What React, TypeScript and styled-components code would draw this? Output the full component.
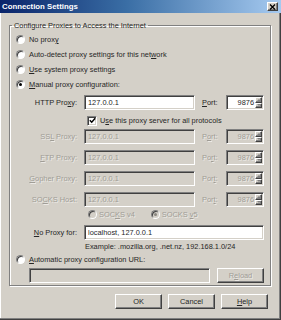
import React from "react";
import styled, { createGlobalStyle, css } from "styled-components";

const GlobalStyle = createGlobalStyle`
  html, body {
    margin: 0;
    padding: 0;
    background: #d4d0c8;
  }
  body {
    font-family: "Liberation Sans", Arial, sans-serif;
    font-size: 7.4px;
    color: #262626;
  }
  u { text-underline-offset: 1px; }
`;

const sunken = css`
  border: 1px solid;
  border-color: #808080 #fff #fff #808080;
  box-shadow: inset 1px 1px #404040, inset -1px -1px #d4d0c8;
`;

const raised = css`
  border: 1px solid;
  border-color: #fff #404040 #404040 #fff;
  box-shadow: inset -1px -1px #808080;
`;

const dimText = css`
  color: #a09d96;
  text-shadow: 1px 1px rgba(255, 255, 255, 0.55);
`;

interface ProxyRowProps {
  label: React.ReactNode;
  portLabel: React.ReactNode;
  host: string;
  port: string;
  disabled?: boolean;
}

function ProxyRow({ label, portLabel, host, port, disabled }: ProxyRowProps) {
  return (
    <Row>
      <FieldLabel $disabled={disabled}>{label}</FieldLabel>
      <TextBox $disabled={disabled} $width={111}>
        {host}
      </TextBox>
      <PortLabel $disabled={disabled}>{portLabel}</PortLabel>
      <PortBox $disabled={disabled}>
        <PortValue>{port}</PortValue>
        <Spinner>
          <SpinHalf>
            <Arrow />
          </SpinHalf>
          <SpinHalf>
            <Arrow $down />
          </SpinHalf>
        </Spinner>
      </PortBox>
    </Row>
  );
}

function App() {
  return (
    <>
      <GlobalStyle />
      <Window>
        <TitleBar>
          <Title>Connection Settings</Title>
          <CloseButton>
            <svg width="7" height="6" viewBox="0 0 7 6">
              <path d="M1 0.5 L6 5.5 M6 0.5 L1 5.5" stroke="#000" strokeWidth="1.3" />
            </svg>
          </CloseButton>
        </TitleBar>

        <Body>
          <Group>
            <Legend>Configure Proxies to Access the Internet</Legend>
            <GroupBody>
              <RadioRow>
                <Radio />
                <span>
                  No prox<u>y</u>
                </span>
              </RadioRow>
              <RadioRow>
                <Radio />
                <span>
                  Auto-detect proxy settings for this net<u>w</u>ork
                </span>
              </RadioRow>
              <RadioRow>
                <Radio />
                <span>
                  <u>U</u>se system proxy settings
                </span>
              </RadioRow>
              <RadioRow>
                <Radio $checked />
                <span>
                  <u>M</u>anual proxy configuration:
                </span>
              </RadioRow>

              <HttpBlock>
                <ProxyRow
                  label={<>HTTP Pro<u>x</u>y:</>}
                  portLabel={<><u>P</u>ort:</>}
                  host="127.0.0.1"
                  port="9876"
                />
              </HttpBlock>

              <CheckRow>
                <CheckBox>
                  <svg width="7" height="7" viewBox="0 0 7 7">
                    <path d="M0.8 3.3 L2.7 5.2 L6.2 1.2" stroke="#000" strokeWidth="1.5" fill="none" />
                  </svg>
                </CheckBox>
                <span>
                  U<u>s</u>e this proxy server for all protocols
                </span>
              </CheckRow>

              <ProxyList>
                <ProxyRow
                  disabled
                  label={<>SS<u>L</u> Proxy:</>}
                  portLabel={<>P<u>o</u>rt:</>}
                  host="127.0.0.1"
                  port="9876"
                />
                <ProxyRow
                  disabled
                  label={<><u>F</u>TP Proxy:</>}
                  portLabel={<>Po<u>r</u>t:</>}
                  host="127.0.0.1"
                  port="9876"
                />
                <ProxyRow
                  disabled
                  label={<><u>G</u>opher Proxy:</>}
                  portLabel={<>Por<u>t</u>:</>}
                  host="127.0.0.1"
                  port="9876"
                />
                <ProxyRow
                  disabled
                  label={<>SO<u>C</u>KS Host:</>}
                  portLabel={<>Por<u>t</u>:</>}
                  host="127.0.0.1"
                  port="9876"
                />
              </ProxyList>

              <SocksRow>
                <Radio $disabled />
                <SocksLabel>
                  SOC<u>K</u>S v4
                </SocksLabel>
                <Radio $disabled $checked />
                <SocksLabel>
                  SOCKS <u>v</u>5
                </SocksLabel>
              </SocksRow>

              <NoProxyRow>
                <FieldLabel>
                  <u>N</u>o Proxy for:
                </FieldLabel>
                <TextBox $width={180}>localhost, 127.0.0.1</TextBox>
              </NoProxyRow>

              <Example>Example: .mozilla.org, .net.nz, 192.168.1.0/24</Example>

              <AutoRow>
                <Radio />
                <span>
                  <u>A</u>utomatic proxy configuration URL:
                </span>
              </AutoRow>

              <UrlRow>
                <TextBox $disabled $width={181} />
                <Button $disabled>
                  R<u>e</u>load
                </Button>
              </UrlRow>
            </GroupBody>
          </Group>

          <ButtonBar>
            <Button>OK</Button>
            <Button>Cancel</Button>
            <Button>
              <u>H</u>elp
            </Button>
          </ButtonBar>
        </Body>
      </Window>
    </>
  );
}

export default App;

const Window = styled.div`
  width: 281px;
  height: 320px;
  box-sizing: border-box;
  background: #d4d0c8;
  box-shadow: inset -1px -1px #404040, inset -2px -2px #808080, inset 1px 0 #fff;
`;

const TitleBar = styled.div`
  height: 13px;
  display: flex;
  align-items: center;
  justify-content: space-between;
  padding: 0 3px 0 2px;
  background: linear-gradient(to right, #0a246a, #3a6ea5 45%, #a6caf0);
`;

const Title = styled.span`
  color: #fff;
  font-weight: bold;
  font-size: 7.8px;
`;

const CloseButton = styled.div`
  ${raised};
  box-sizing: border-box;
  width: 11px;
  height: 9px;
  background: #d4d0c8;
  display: flex;
  align-items: center;
  justify-content: center;
`;

const Body = styled.div`
  padding: 8px 10px 0 9px;
`;

const Group = styled.fieldset`
  margin: 0;
  padding: 0 2px 2px 2px;
  border: 1px solid #808080;
  box-shadow: inset 1px 1px #fff, 1px 1px #fff;
`;

const Legend = styled.legend`
  padding: 0 2px;
  line-height: 9px;
`;

const GroupBody = styled.div`
  display: flex;
  flex-direction: column;
  padding: 2px 0 0 4px;
`;

const RadioRow = styled.div`
  height: 15px;
  display: flex;
  align-items: center;
  gap: 4px;
`;

const Radio = styled.span<{ $checked?: boolean; $disabled?: boolean }>`
  position: relative;
  box-sizing: border-box;
  width: 9px;
  height: 9px;
  flex: none;
  border-radius: 50%;
  border: 1px solid;
  border-color: #808080 #fff #fff #808080;
  box-shadow: inset 1px 1px #404040;
  background: ${(p) => (p.$disabled ? "#d4d0c8" : "#fff")};

  &::after {
    content: "";
    display: ${(p) => (p.$checked ? "block" : "none")};
    position: absolute;
    left: 2px;
    top: 2px;
    width: 3px;
    height: 3px;
    border-radius: 50%;
    background: ${(p) => (p.$disabled ? "#8a8780" : "#000")};
  }
`;

const HttpBlock = styled.div`
  margin-top: 3px;
`;

const Row = styled.div`
  height: 15px;
  display: flex;
  align-items: center;
`;

const FieldLabel = styled.span<{ $disabled?: boolean }>`
  width: 61px;
  margin-right: 7px;
  text-align: right;
  white-space: nowrap;
  ${(p) => p.$disabled && dimText};
`;

const TextBox = styled.div<{ $disabled?: boolean; $width: number }>`
  ${sunken};
  box-sizing: border-box;
  width: ${(p) => p.$width}px;
  height: 15px;
  padding: 0 3px;
  display: flex;
  align-items: center;
  white-space: nowrap;
  background: ${(p) => (p.$disabled ? "#d4d0c8" : "#fff")};
  ${(p) => p.$disabled && dimText};
`;

const PortLabel = styled.span<{ $disabled?: boolean }>`
  width: 24px;
  margin-left: 7px;
  ${(p) => p.$disabled && dimText};
`;

const PortBox = styled.div<{ $disabled?: boolean }>`
  ${sunken};
  box-sizing: border-box;
  width: 38px;
  height: 15px;
  padding: 1px;
  display: flex;
  align-items: stretch;
  background: ${(p) => (p.$disabled ? "#d4d0c8" : "#fff")};
  ${(p) => p.$disabled && dimText};
`;

const PortValue = styled.span`
  flex: 1;
  display: flex;
  align-items: center;
  justify-content: flex-end;
  padding-right: 1px;
`;

const Spinner = styled.div`
  width: 7px;
  display: flex;
  flex-direction: column;
`;

const SpinHalf = styled.div`
  ${raised};
  flex: 1;
  background: #d4d0c8;
  display: flex;
  align-items: center;
  justify-content: center;
`;

const Arrow = styled.span<{ $down?: boolean }>`
  width: 0;
  height: 0;
  border-left: 2px solid transparent;
  border-right: 2px solid transparent;
  ${(p) =>
    p.$down ? "border-top: 2px solid #808080;" : "border-bottom: 2px solid #808080;"}
`;

const CheckRow = styled.div`
  height: 17px;
  margin-top: 2px;
  padding-left: 71px;
  display: flex;
  align-items: center;
  gap: 3px;
`;

const CheckBox = styled.span`
  ${sunken};
  box-sizing: border-box;
  width: 10px;
  height: 10px;
  background: #fff;
  display: flex;
  align-items: center;
  justify-content: center;
`;

const ProxyList = styled.div`
  display: flex;
  flex-direction: column;
  gap: 6px;
`;

const SocksRow = styled.div`
  height: 14px;
  padding-left: 72px;
  display: flex;
  align-items: center;
  gap: 2px;
`;

const SocksLabel = styled.span`
  ${dimText};
  margin-right: 14px;
`;

const NoProxyRow = styled(Row)`
  margin-top: 4px;
`;

const Example = styled.div`
  height: 12px;
  padding-left: 69px;
  display: flex;
  align-items: center;
`;

const AutoRow = styled(RadioRow)`
  height: 14px;
`;

const UrlRow = styled.div`
  margin-top: 2px;
  padding-left: 13px;
  display: flex;
  align-items: center;
  gap: 7px;
`;

const Button = styled.div<{ $disabled?: boolean }>`
  ${raised};
  box-sizing: border-box;
  width: 47px;
  height: 15px;
  display: flex;
  align-items: center;
  justify-content: center;
  background: #d4d0c8;
  ${(p) => p.$disabled && dimText};
`;

const ButtonBar = styled.div`
  margin-top: 8px;
  padding-right: 3px;
  display: flex;
  justify-content: flex-end;
  gap: 6px;
`;
